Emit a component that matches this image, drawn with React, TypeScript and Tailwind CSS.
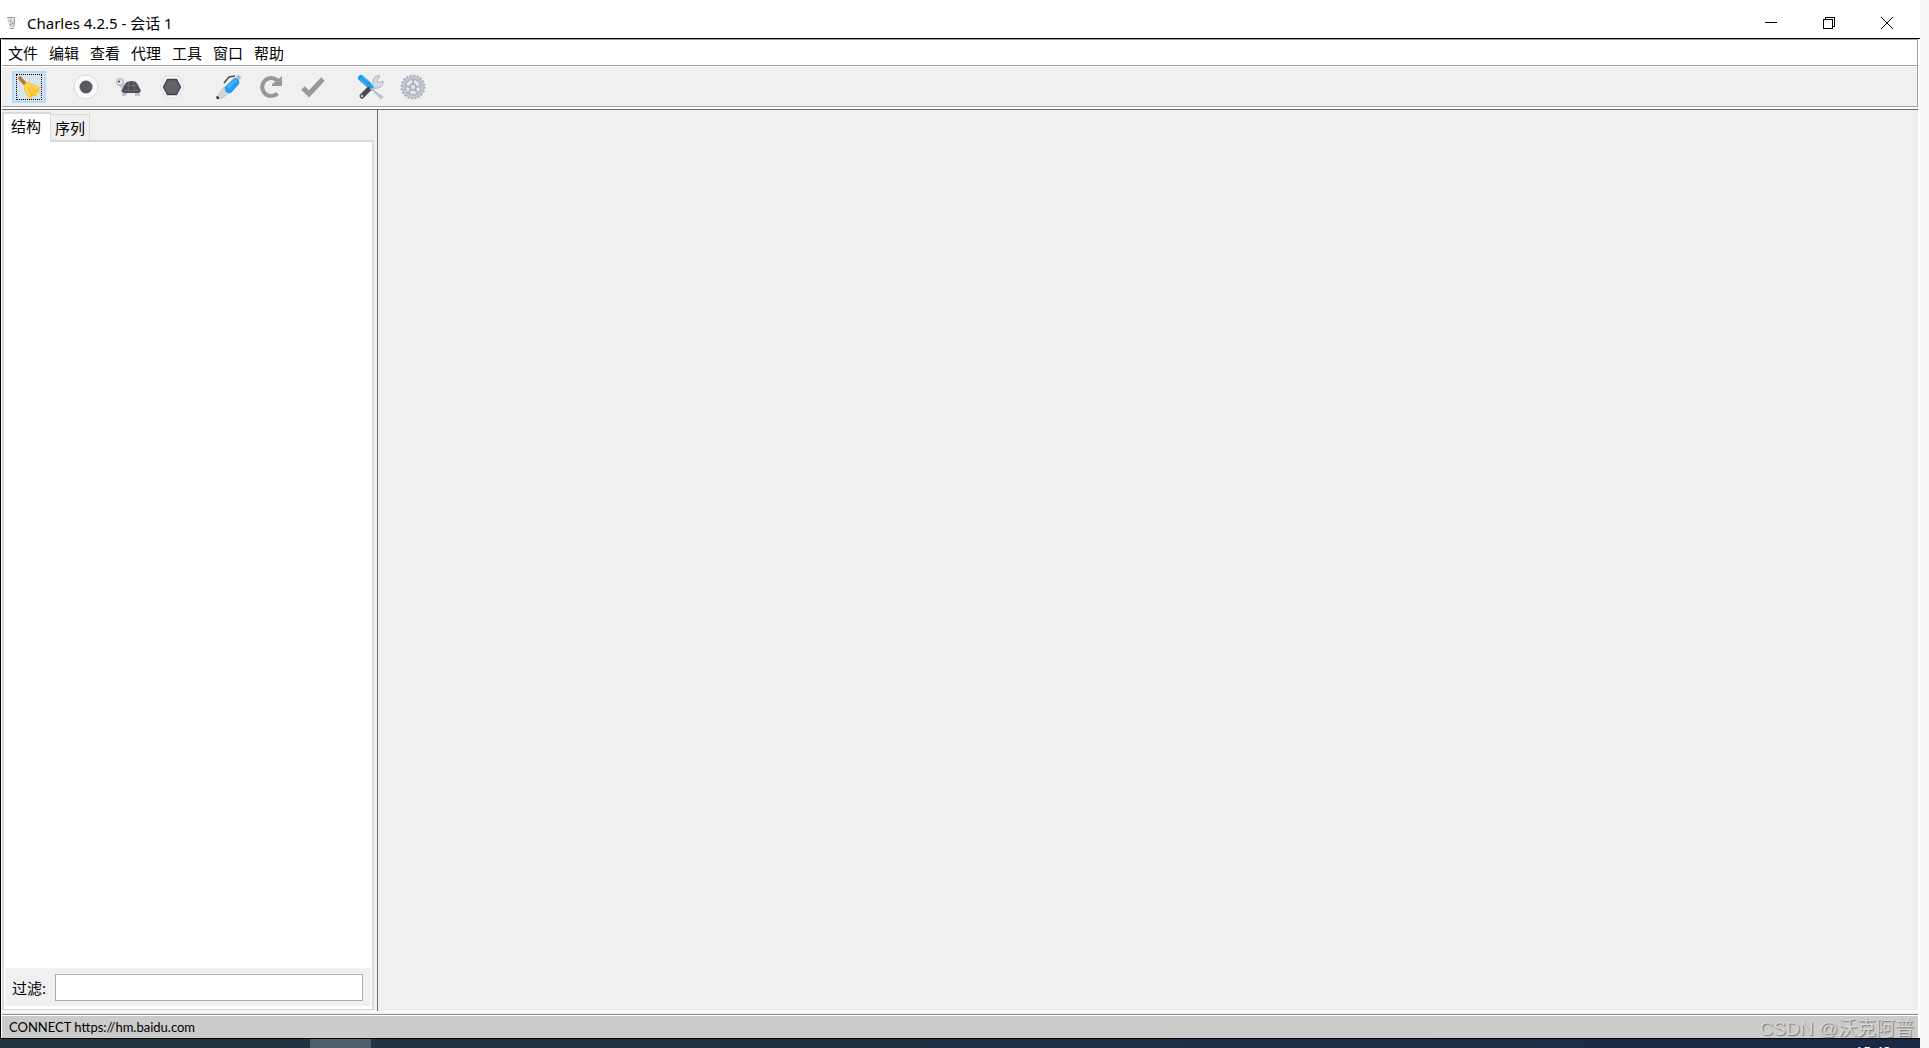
import type { ReactNode } from 'react'

const menus = ['文件', '编辑', '查看', '代理', '工具', '窗口', '帮助']

const uiFont = "font-['Noto_Sans','Noto_Sans_CJK_SC',sans-serif]"

function JugIcon() {
  return (
    <svg width="14" height="14" viewBox="0 0 14 14" aria-hidden="true">
      <path d="M1 1h8v4l-1 5-1 2H4l-1-2-1-5z" fill="#dcdfdc" />
      <path d="M1 1.5h8M4 12.5h4M8.5 3v5l-1 3" fill="none" stroke="#9b9e9c" />
      <path d="M10 1.5c3 0 3 2 2 4" fill="none" stroke="#e6e8e6" />
      <circle cx="4.5" cy="5" r="1" fill="#dd8a80" />
      <circle cx="6.5" cy="7" r="1" fill="#7fb5a0" />
      <circle cx="4.5" cy="8.5" r="1" fill="#c97a86" />
    </svg>
  )
}

function BroomIcon() {
  return (
    <svg width="26" height="26" viewBox="0 0 26 26" aria-hidden="true">
      <path d="M2 2l7 8" stroke="#b5793c" strokeWidth="3.5" />
      <path d="M7 11c0-2 2-4 5-4l12 6-2 2 1 2-3 1-1 3-3 0-3 3-2-2c-1-4-5-5-4-11z" fill="#fbc62f" />
      <path d="M8 11c1-2 2-3 4-3l9 5c-5 2-8 5-9 9-2-4-4-6-4-11z" fill="#fdd654" />
      <path d="M11 12l4 9M14 11l5 6" stroke="#f2b325" fill="none" />
    </svg>
  )
}

function RecordIcon() {
  return (
    <svg width="26" height="26" viewBox="0 0 26 26" aria-hidden="true">
      <circle cx="13" cy="13" r="12" fill="#f9fafc" stroke="#d6dae3" />
      <circle cx="13" cy="13" r="6.5" fill="#595a61" />
    </svg>
  )
}

function TurtleIcon() {
  return (
    <svg width="26" height="26" viewBox="0 0 26 26" aria-hidden="true">
      <path d="M3 10l4-4 2 7-2 3-4-4z" fill="#c3c8d5" />
      <path d="M6 17h5v3l-2 2H6zM19 17l5 1v4h-5z" fill="#bcc1cf" />
      <circle cx="4" cy="8" r="3.500" fill="#dfe2ea" stroke="#a9aebc" />
      <circle cx="3" cy="7.500" r="1" fill="#44454c" />
      <path d="M5 17c2-2 2-4 4-7 1-2 4-3 7-3 4 0 6 3 7 6l2 4-2 2H8z" fill="#4e4f56" />
      <path d="M8 16c5 1 10 1 15 0M9 11c5 1 9 1 13 0M13 8l-1 8M17 8l2 8" fill="none" stroke="#6e6f77" />
    </svg>
  )
}

function HexagonIcon() {
  return (
    <svg width="26" height="26" viewBox="0 0 26 26" aria-hidden="true">
      <path d="M7 2h12l6 11-6 11H7L1 13z" fill="#fafbfc" stroke="#d5d9e1" />
      <path d="M8.5 5.5h9l4 7.500-4 7.500h-9l-4-7.500z" fill="#61626a" stroke="#45464d" strokeWidth="1.5" />
    </svg>
  )
}

function PenIcon() {
  return (
    <svg width="26" height="26" viewBox="0 0 26 26" aria-hidden="true">
      <path d="M20 6l4-4" stroke="#b7bbc7" strokeWidth="4" />
      <path d="M8 13l6 5-9 7-3-1 1-4z" fill="#d3d6e0" stroke="#b9bdca" />
      <path d="M9 13l8-8c2-3 8 1 6 5l-8 9c-4 1-7-2-6-6z" fill="#229eef" />
      <path d="M12 14l8-8" stroke="#42b2fb" strokeWidth="3" />
      <path d="M8 9l5-6 6-1" fill="none" stroke="#4b4c52" strokeWidth="1.5" />
      <path d="M1 22l2 2-2 1z" fill="#303139" stroke="#303139" />
    </svg>
  )
}

function RepeatIcon() {
  return (
    <svg width="26" height="26" viewBox="0 0 26 26" aria-hidden="true">
      <path d="M19.5 6.5a9 9 0 1 0 0 13" fill="none" stroke="#989898" strokeWidth="4" />
      <path d="M24 2v10H14v-2z" fill="#989898" />
    </svg>
  )
}

function CheckIcon() {
  return (
    <svg width="26" height="26" viewBox="0 0 26 26" aria-hidden="true">
      <path d="M3 14l6 6L23 5" fill="none" stroke="#989898" strokeWidth="5" />
    </svg>
  )
}

function ToolsIcon() {
  return (
    <svg width="26" height="26" viewBox="0 0 26 26" aria-hidden="true">
      <path d="M14 15l4 3 7 5-2 2-5-5z" fill="#c6cad5" stroke="#b3b8c5" />
      <path d="M4 22l8-8" stroke="#48494f" strokeWidth="5" strokeLinecap="round" />
      <circle cx="4" cy="22" r="1.2" fill="#c9ccd4" />
      <path d="M12 14l3-4c-1-5 2-9 7-8l-3 4 1 3 5-2c1 5-4 8-8 7l-3 3z" fill="#d8dbe5" stroke="#a9aebd" />
      <path d="M3 4l7 6" stroke="#209cf0" strokeWidth="6" strokeLinecap="round" />
      <path d="M9 9l6 5" stroke="#209cf0" strokeWidth="3" />
      <path d="M2 5l7 6M4 3l7 5" stroke="#50b5f8" />
    </svg>
  )
}

function GearIcon() {
  return (
    <svg width="26" height="26" viewBox="0 0 26 26" aria-hidden="true">
      <circle cx="13" cy="13" r="11.5" fill="none" stroke="#a9adbb" strokeWidth="2" strokeDasharray="2 1.61" />
      <circle cx="13" cy="13" r="9" fill="#e6e7ec" stroke="#b4b8c5" strokeWidth="4" />
      <circle cx="13" cy="13" r="9.5" fill="none" stroke="#d0d3dc" />
      <path d="M13 5v5M5 12l5 1M8 20l3-5M18 20l-3-5M21 12l-5 1" stroke="#b0b4c1" strokeWidth="2" />
      <circle cx="13" cy="13" r="3" fill="#dee0e7" stroke="#a7abb9" strokeWidth="1.5" />
    </svg>
  )
}

function ToolButton({ label, children }: { label: string; children: ReactNode }) {
  return (
    <button aria-label={label} className="grid h-8 w-[34px] place-items-center">
      {children}
    </button>
  )
}

function TitleBar() {
  return (
    <header className="flex h-[38px] items-center bg-white pt-2 pl-[6px]">
      <JugIcon />
      <h1 className="ml-[7px] flex-1 pb-px text-[15px] leading-5">Charles 4.2.5 - 会话 1</h1>
      <button aria-label="最小化" className="grid h-[30px] w-[58px] place-items-center">
        <svg width="12" height="12" viewBox="0 0 12 12" stroke="#000" shapeRendering="crispEdges">
          <path d="M0 5.5h12" />
        </svg>
      </button>
      <button aria-label="还原" className="grid h-[30px] w-[58px] place-items-center">
        <svg width="12" height="12" viewBox="0 0 12 12" fill="none" stroke="#000" shapeRendering="crispEdges">
          <path d="M.5 2.5h9v9h-9zM2.5 2.5v-2h9v9h-2" />
        </svg>
      </button>
      <button aria-label="关闭" className="mr-1 grid h-[30px] w-[58px] place-items-center">
        <svg width="12" height="12" viewBox="0 0 12 12" stroke="#000">
          <path d="M0 0l12 12M12 0L0 12" />
        </svg>
      </button>
    </header>
  )
}

function MenuBar() {
  return (
    <nav className="flex h-[25px] items-center gap-[11px] bg-white pl-[6px]">
      {menus.map((name) => (
        <button key={name} className="text-[15px] leading-5">
          {name}
        </button>
      ))}
    </nav>
  )
}

function ToolBar() {
  return (
    <div className="flex h-[42px] items-center border-y border-[#a0a0a0] bg-[#f0f0f0] pt-px pl-[10px] shadow-[inset_0_1px_0_#fff]">
      <button aria-label="清除" className="grid h-8 w-[34px] place-items-center border-2 border-[#b9daf2] bg-[#d7e5f0]">
        <span className="grid h-[26px] w-[26px] place-items-center border border-dotted border-black">
          <BroomIcon />
        </span>
      </button>
      <div className="ml-[23px] flex gap-[9px]">
        <ToolButton label="录制"><RecordIcon /></ToolButton>
        <ToolButton label="限速"><TurtleIcon /></ToolButton>
        <ToolButton label="断点"><HexagonIcon /></ToolButton>
      </div>
      <div className="ml-[23px] flex gap-2">
        <ToolButton label="编写"><PenIcon /></ToolButton>
        <ToolButton label="重复"><RepeatIcon /></ToolButton>
        <ToolButton label="验证"><CheckIcon /></ToolButton>
      </div>
      <div className="ml-6 flex gap-2">
        <ToolButton label="工具"><ToolsIcon /></ToolButton>
        <ToolButton label="设置"><GearIcon /></ToolButton>
      </div>
    </div>
  )
}

function Sidebar() {
  return (
    <aside className="flex w-[376px] flex-col border-r border-[#696969] pt-[2px] pr-[3px] pb-px">
      <div role="tablist" className="flex h-[28px] items-end">
        <button role="tab" aria-selected="true" className="z-10 -mb-[2px] h-[30px] w-[49px] border-t-2 border-r border-l-2 border-[#d9d9d9] bg-white pr-[2px] pb-1 text-[15px] leading-5">
          结构
        </button>
        <button role="tab" aria-selected="false" className="h-[26px] w-[39px] border-t border-r border-[#d9d9d9] bg-[#f0f0f0] text-[15px] leading-5">
          序列
        </button>
      </div>
      <div className="flex flex-1 flex-col border-2 border-b border-[#d9d9d9] bg-white px-px pb-[3px]">
        <div role="tree" aria-label="结构" className="flex-1" />
        <div className="flex h-[38px] items-center bg-[#f0f0f0] pr-2 pl-[7px]">
          <label htmlFor="filter" className="w-[43px] pt-[2px] text-[15px] leading-5">过滤:</label>
          <input id="filter" type="text" className="h-[27px] min-w-0 flex-1 border border-[#abadb3] bg-white px-1 text-[15px] outline-none" />
        </div>
      </div>
    </aside>
  )
}

export default function App() {
  return (
    <div className={`flex h-screen flex-col overflow-hidden bg-[#f5f6f8] pr-[9px] text-black ${uiFont}`}>
      <TitleBar />
      <div className="flex flex-1 flex-col border-y border-l border-black bg-white pl-px">
        <div className="mr-[2px] border-t border-r border-[#a0a0a0]">
          <MenuBar />
          <ToolBar />
        </div>
        <div className="mt-[2px] mr-[2px] flex flex-1 border-t border-b border-t-[#696969] border-b-white bg-[#f0f0f0]">
          <Sidebar />
          <main className="flex-1" />
        </div>
        <footer className="relative mr-[2px] flex h-[26px] flex-col bg-[#f0f0f0] pt-[2px]">
          <div className="flex flex-1 items-center border-t border-[#8c8c8c] bg-[#cbcbcb] pl-[7px] shadow-[inset_0_1px_0_#fff]">
            <span className="pt-px font-['Lato',sans-serif] text-[13px] leading-5">CONNECT https://hm.baidu.com</span>
          </div>
          <span className="absolute right-1 bottom-0 font-['Liberation_Sans','Noto_Sans_CJK_SC',sans-serif] text-[19px] leading-[18px] text-[#d6d6d6] [text-shadow:1px_1px_1px_#777]">
            CSDN @沃克阿普
          </span>
        </footer>
      </div>
      <div className="flex h-[9px] justify-between overflow-hidden bg-linear-to-r from-[#203742] to-[#1a2a44]">
        <div className="ml-[310px] w-[61px] bg-[#4d5f68]" />
        <time className="mt-[3px] mr-[29px] text-[14px] leading-5 text-white">15:42</time>
      </div>
    </div>
  )
}
